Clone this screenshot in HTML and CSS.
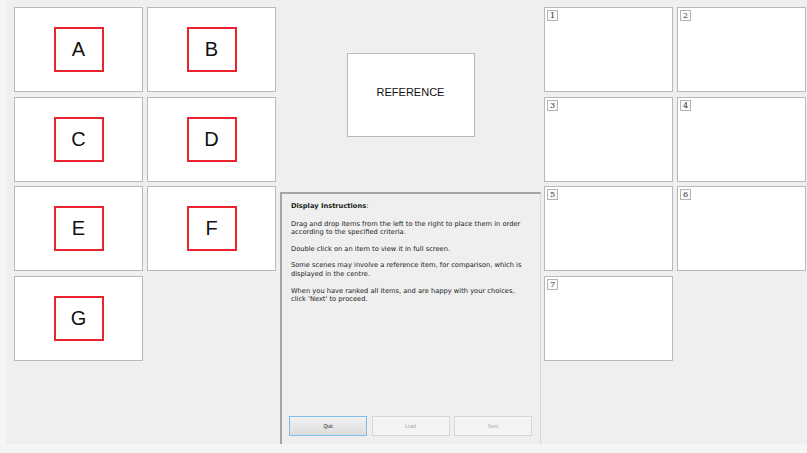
FILE: index.html
```html
<!DOCTYPE html>
<html lang="en">
<head>
<meta charset="utf-8">
<title>Ranking</title>
<link rel="stylesheet" href="styles.css">
</head>
<body>
<div class="app">
  <section class="pool">
    <div class="card"><span class="tag">A</span></div>
    <div class="card"><span class="tag">B</span></div>
    <div class="card"><span class="tag">C</span></div>
    <div class="card"><span class="tag">D</span></div>
    <div class="card"><span class="tag">E</span></div>
    <div class="card"><span class="tag">F</span></div>
    <div class="card"><span class="tag">G</span></div>
  </section>

  <section class="centre">
    <div class="reference">REFERENCE</div>
    <div class="panel">
      <div class="instructions">
        <p class="title"><b>Display Instructions</b>:</p>
        <p>Drag and drop items from the left to the right to place them in order according to the specified criteria.</p>
        <p>Double click on an item to view it in full screen.</p>
        <p>Some scenes may involve a reference item, for comparison, which is displayed in the centre.</p>
        <p>When you have ranked all items, and are happy with your choices, click 'Next' to proceed.</p>
      </div>
      <div class="buttons">
        <button class="btn primary">Quit</button>
        <button class="btn" disabled>Load</button>
        <button class="btn" disabled>Next</button>
      </div>
    </div>
  </section>

  <section class="ranks">
    <div class="slot"><span class="num">1</span></div>
    <div class="slot"><span class="num">2</span></div>
    <div class="slot"><span class="num">3</span></div>
    <div class="slot"><span class="num">4</span></div>
    <div class="slot"><span class="num">5</span></div>
    <div class="slot"><span class="num">6</span></div>
    <div class="slot"><span class="num">7</span></div>
  </section>
</div>
</body>
</html>
```

FILE: styles.css
```css
html, body {
  margin: 0;
  padding: 0;
}

body {
  background: #f5f5f5;
  width: 807px;
  height: 453px;
  overflow: hidden;
  font-family: "Liberation Sans", Arial, sans-serif;
}

.app {
  margin-left: 6px;
  width: 801px;
  height: 444px;
  background: #efefef;
  display: flex;
}

/* unranked items on the left, ranking slots on the right */
.pool,
.ranks {
  display: grid;
  grid-template-columns: 129px 129px;
  grid-auto-rows: 85px;
  column-gap: 4px;
  row-gap: 4.5px;
  align-content: start;
  padding-top: 7px;
}

.pool {
  padding-left: 8px;
  padding-right: 4px;
}

.ranks {
  padding-left: 3px;
}

.card,
.slot {
  box-sizing: border-box;
  background: #ffffff;
  border: 1px solid #b9b9b9;
}

.card {
  display: flex;
  align-items: center;
  justify-content: center;
}

.tag {
  box-sizing: border-box;
  width: 50px;
  height: 45px;
  border: 2px solid #e8232b;
  display: flex;
  align-items: center;
  justify-content: center;
  font-size: 20px;
  color: #111111;
}

.slot {
  padding: 2px;
}

.num {
  box-sizing: border-box;
  display: flex;
  align-items: center;
  justify-content: center;
  width: 11px;
  height: 11px;
  border: 1px solid #b4b4b4;
  font-family: "DejaVu Serif", serif;
  font-size: 8px;
  color: #333333;
  background: #fafafa;
}

/* centre column */
.centre {
  width: 261px;
  display: flex;
  flex-direction: column;
  align-items: center;
}

.reference {
  box-sizing: border-box;
  margin-top: 53px;
  width: 128px;
  height: 84px;
  padding-bottom: 6px;
  background: #ffffff;
  border: 1px solid #b9b9b9;
  display: flex;
  align-items: center;
  justify-content: center;
  font-size: 11px;
  color: #111111;
}

.panel {
  box-sizing: border-box;
  align-self: stretch;
  margin-top: 55px;
  flex: 1;
  border-top: 2px solid #a6a6a6;
  border-left: 2px solid #a6a6a6;
  border-right: 1px solid #d8d8d8;
  display: flex;
  flex-direction: column;
  justify-content: space-between;
}

.instructions {
  padding: 8px 17px 0 9px;
  font-family: "DejaVu Sans", Verdana, sans-serif;
  font-size: 6.7px;
  line-height: 8.6px;
  color: #1c1c1c;
}

.instructions p {
  margin: 0 0 8px 0;
}

.instructions .title {
  margin-bottom: 9px;
}

.buttons {
  display: flex;
  gap: 4.5px;
  padding: 0 0 8px 7px;
}

.btn {
  box-sizing: border-box;
  width: 78px;
  height: 20px;
  padding: 0;
  font-family: "Liberation Sans", Arial, sans-serif;
  font-size: 5px;
  color: #aaaaaa;
  background: #f4f4f4;
  border: 1px solid #d6d6d6;
  border-radius: 0;
}

.btn.primary {
  color: #222222;
  background: linear-gradient(#f2f2f2, #dcdcdc);
  border: 1px solid #7cc0ea;
}
```
